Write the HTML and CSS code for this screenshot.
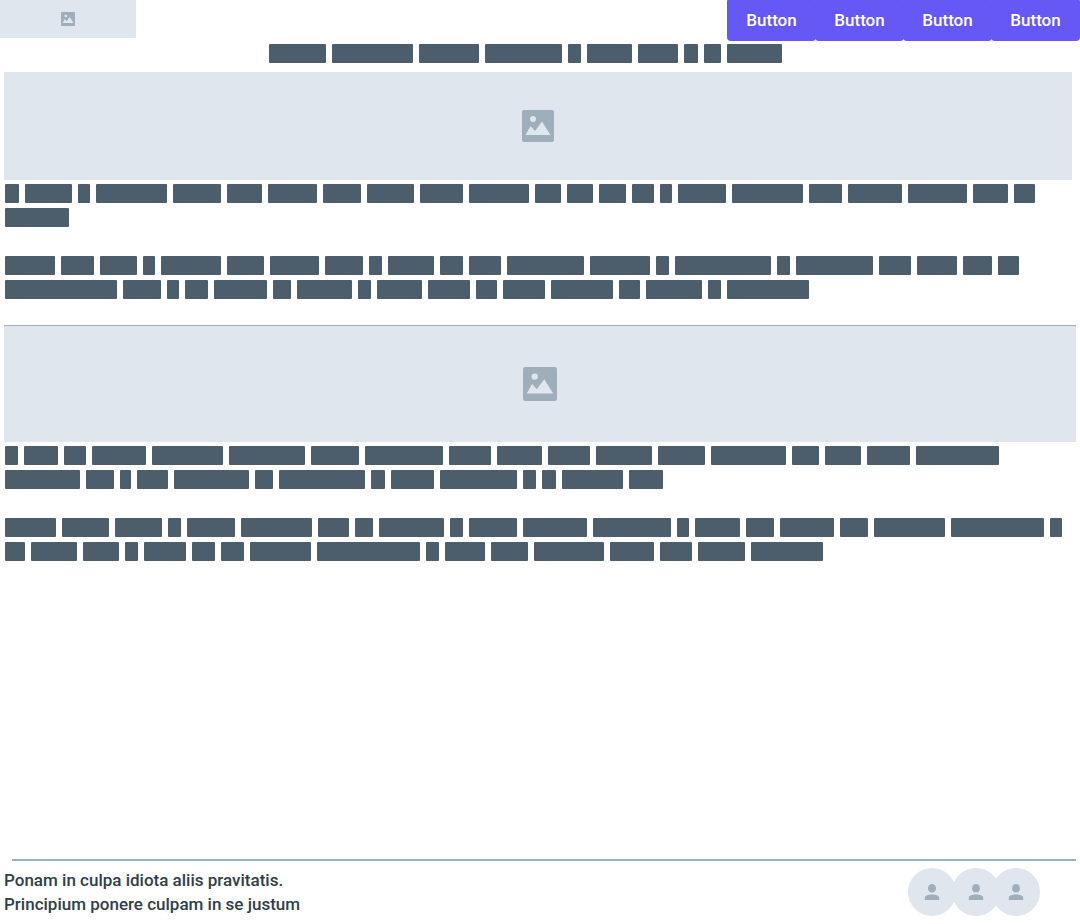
FILE: index.html
```html
<!DOCTYPE html>
<html lang="en">
<head>
<meta charset="utf-8">
<meta name="viewport" content="width=device-width, initial-scale=1">
<title>Wireframe</title>
<link rel="stylesheet" href="styles.css">
</head>
<body>
<svg class="defs" aria-hidden="true">
  <symbol id="picture" viewBox="0 0 32 32">
    <path fill="currentColor" fill-rule="evenodd" d="M2 0h28a2 2 0 0 1 2 2v28a2 2 0 0 1-2 2H2a2 2 0 0 1-2-2V2a2 2 0 0 1 2-2zM11 6a3 3 0 1 0 0 6a3 3 0 1 0 0-6zM3.5 25h25L20 11.500l-7 9.500l-4.500-5z"/>
  </symbol>
  <symbol id="person" viewBox="0 0 16 16">
    <ellipse fill="currentColor" cx="8" cy="4.300" rx="4" ry="4.300"/>
    <path fill="currentColor" d="M.8 16v-2.200c0-2.400 3.400-3.400 7.200-3.400s7.200 1 7.200 3.400V16z"/>
  </symbol>
</svg>
<div class="page">
  <header class="header">
    <div class="image logo"><svg class="icon icon-small"><use href="#picture"/></svg></div>
    <nav class="nav">
      <button class="button" type="button">Button</button>
      <button class="button" type="button">Button</button>
      <button class="button" type="button">Button</button>
      <button class="button" type="button">Button</button>
    </nav>
  </header>
  <main class="main">
    <div class="words title" data-words="57 81 60 77 13 45 40 14 17 55"></div>
    <section class="section">
      <div class="image hero"><svg class="icon icon-medium"><use href="#picture"/></svg></div>
      <div class="copy">
        <div class="words" data-words="14 47 12 71 48 35 49 38 47 43 60 26 26 27 22 12 48 71 33 54 59 35 21 64"></div>
        <div class="words" data-words="50 33 37 12 60 37 49 38 13 46 23 32 77 60 13 96 13 77 32 40 29 21 112 38 12 23 53 18 55 13 45 42 21 42 62 21 56 13 82"></div>
      </div>
    </section>
    <section class="section">
      <div class="image feature"><svg class="icon icon-large"><use href="#picture"/></svg></div>
      <div class="copy">
        <div class="words" data-words="13 34 22 54 71 76 48 78 42 45 42 56 47 75 27 36 43 83 75 28 11 31 75 18 86 14 43 77 13 14 61 34"></div>
        <div class="words" data-words="51 47 47 13 48 71 31 18 65 13 48 64 78 12 45 28 54 28 71 93 12 20 46 36 13 42 23 23 61 103 13 40 37 70 44 32 47 72"></div>
      </div>
    </section>
  </main>
  <footer class="footer">
    <p class="note">Ponam in culpa idiota aliis pravitatis.<br>Principium ponere culpam in se justum</p>
    <div class="avatars">
      <div class="avatar"><svg class="icon icon-person"><use href="#person"/></svg></div>
      <div class="avatar"><svg class="icon icon-person"><use href="#person"/></svg></div>
      <div class="avatar avatar-tight"><svg class="icon icon-person"><use href="#person"/></svg></div>
    </div>
  </footer>
</div>
<script src="words.js"></script>
</body>
</html>
```
FILE: styles.css
```css
* {
  box-sizing: border-box;
}

body {
  margin: 0;
  background: #fff;
  color: #2f3e4b;
  font-family: Roboto, "Liberation Sans", sans-serif;
  font-size: 17px;
  font-weight: 500;
  line-height: 24px;
}

.defs {
  position: absolute;
  width: 0;
  height: 0;
}

.page {
  display: flex;
  flex-direction: column;
  min-height: 100vh;
}

.header {
  display: flex;
  justify-content: space-between;
  align-items: flex-start;
}

.image {
  display: flex;
  align-items: center;
  justify-content: center;
  background: #dfe6ee;
  color: #9eaebb;
}

.logo {
  width: 136px;
  height: 38px;
}

.icon {
  display: block;
  flex: none;
}

.icon-small {
  width: 14px;
  height: 14px;
}

.icon-medium {
  width: 32px;
  height: 32px;
}

.icon-large {
  width: 34px;
  height: 34px;
}

.icon-person {
  width: 16px;
  height: 16px;
}

.nav {
  display: flex;
}

.button {
  width: 89px;
  height: 41px;
  padding: 0 0 2px;
  border: 0;
  border-radius: 1px 1px 4px 4px;
  background: #6558f5;
  color: #fff;
  font: inherit;
}

.button + .button {
  margin-left: -1px;
}

.words {
  display: flex;
  flex-wrap: wrap;
  gap: 5px 6px;
}

.word {
  height: 19px;
  border-radius: 1px;
  background: #4c5d6b;
}

.title {
  justify-content: center;
  padding: 3px 30px 9px 0;
}

.hero {
  height: 108px;
  margin: 0 8px 0 4px;
}

.feature {
  height: 117px;
  margin: 0 4px;
  border-top: 1px solid #9eaebb;
}

.copy {
  display: flex;
  flex-direction: column;
  gap: 29px;
  padding: 4px 4px 26px 5px;
}

.footer {
  display: flex;
  justify-content: space-between;
  align-items: flex-start;
  margin-top: auto;
  padding: 0 40px 8px 4px;
}

.footer::before {
  content: "";
  position: absolute;
  left: 12px;
  right: 4px;
  height: 2px;
  background: #9eaebb;
}

.note {
  margin: 9px 0 0;
}

.avatars {
  display: flex;
  margin-top: 9px;
}

.avatar {
  display: flex;
  align-items: center;
  justify-content: center;
  width: 48px;
  height: 48px;
  border-radius: 50%;
  background: #dfe6ee;
  color: #9eaebb;
}

.avatar + .avatar {
  margin-left: -4px;
}

.avatar + .avatar-tight {
  margin-left: -8px;
}
```
FILE: words.js
```js
// Draws one placeholder bar for each word width listed on a block.
document.querySelectorAll("[data-words]").forEach((block) => {
  block.dataset.words.split(" ").forEach((width) => {
    const word = document.createElement("span");
    word.className = "word";
    word.style.width = width + "px";
    block.append(word);
  });
});
```
